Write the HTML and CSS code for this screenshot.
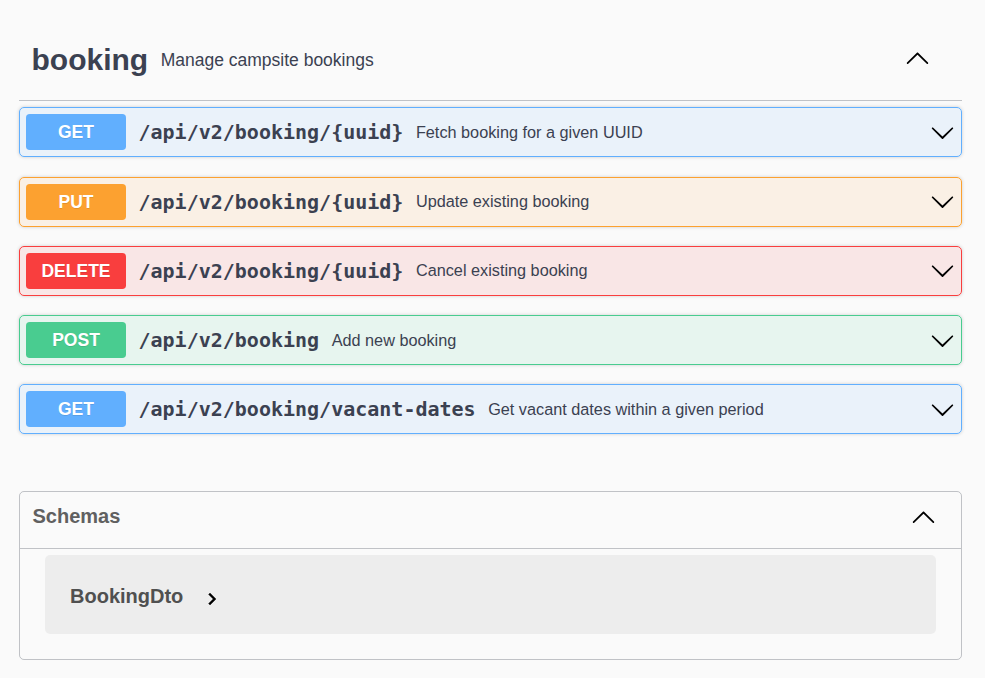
FILE: index.html
```html
<!DOCTYPE html>
<html lang="en">
<head>
<meta charset="utf-8">
<title>booking</title>
<link rel="stylesheet" href="styles.css">
</head>
<body>
<div class="wrapper">
  <section class="tag-section">
    <h3 class="tag">
      <span class="tag-name">booking</span>
      <small class="tag-desc">Manage campsite bookings</small>
      <button class="expand">
        <svg class="arrow" width="25" height="25" viewBox="0 0 20 20"><path d="M17.418 14.908c.272.268.709.268.979 0s.271-.701 0-.969L10.489 6.109c-.27-.268-.707-.268-.979 0L1.602 13.939c-.27.268-.27.701 0 .969.271.268.709.268.979 0L10 7.767l7.418 7.141z"/></svg>
      </button>
    </h3>
    <div class="opblock get">
      <div class="summary">
        <span class="method">GET</span>
        <span class="path">/api/v2/booking/{uuid}</span>
        <span class="desc">Fetch booking for a given UUID</span>
        <svg class="arrow" width="25" height="25" viewBox="0 0 20 20"><path d="M17.418 6.109c.272-.268.709-.268.979 0s.271.701 0 .969l-7.908 7.83c-.27.268-.707.268-.979 0l-7.908-7.83c-.27-.268-.27-.701 0-.969.271-.268.709-.268.979 0L10 13.25l7.418-7.141z"/></svg>
      </div>
    </div>
    <div class="opblock put">
      <div class="summary">
        <span class="method">PUT</span>
        <span class="path">/api/v2/booking/{uuid}</span>
        <span class="desc">Update existing booking</span>
        <svg class="arrow" width="25" height="25" viewBox="0 0 20 20"><path d="M17.418 6.109c.272-.268.709-.268.979 0s.271.701 0 .969l-7.908 7.83c-.27.268-.707.268-.979 0l-7.908-7.83c-.27-.268-.27-.701 0-.969.271-.268.709-.268.979 0L10 13.25l7.418-7.141z"/></svg>
      </div>
    </div>
    <div class="opblock delete">
      <div class="summary">
        <span class="method">DELETE</span>
        <span class="path">/api/v2/booking/{uuid}</span>
        <span class="desc">Cancel existing booking</span>
        <svg class="arrow" width="25" height="25" viewBox="0 0 20 20"><path d="M17.418 6.109c.272-.268.709-.268.979 0s.271.701 0 .969l-7.908 7.83c-.27.268-.707.268-.979 0l-7.908-7.83c-.27-.268-.27-.701 0-.969.271-.268.709-.268.979 0L10 13.25l7.418-7.141z"/></svg>
      </div>
    </div>
    <div class="opblock post">
      <div class="summary">
        <span class="method">POST</span>
        <span class="path">/api/v2/booking</span>
        <span class="desc">Add new booking</span>
        <svg class="arrow" width="25" height="25" viewBox="0 0 20 20"><path d="M17.418 6.109c.272-.268.709-.268.979 0s.271.701 0 .969l-7.908 7.83c-.27.268-.707.268-.979 0l-7.908-7.830c-.27-.268-.27-.701 0-.969.271-.268.709-.268.979 0L10 13.25l7.418-7.141z"/></svg>
      </div>
    </div>
    <div class="opblock get">
      <div class="summary">
        <span class="method">GET</span>
        <span class="path">/api/v2/booking/vacant-dates</span>
        <span class="desc">Get vacant dates within a given period</span>
        <svg class="arrow" width="25" height="25" viewBox="0 0 20 20"><path d="M17.418 6.109c.272-.268.709-.268.979 0s.271.701 0 .969l-7.908 7.83c-.27.268-.707.268-.979 0l-7.908-7.83c-.27-.268-.27-.701 0-.969.271-.268.709-.268.979 0L10 13.25l7.418-7.141z"/></svg>
      </div>
    </div>
  </section>

  <section class="models">
    <h4 class="models-head">
      <span class="models-title">Schemas</span>
      <svg class="arrow" width="25" height="25" viewBox="0 0 20 20"><path d="M17.418 14.908c.272.268.709.268.979 0s.271-.701 0-.969L10.489 6.109c-.27-.268-.707-.268-.979 0L1.602 13.939c-.27.268-.27.701 0 .969.271.268.709.268.979 0L10 7.767l7.418 7.141z"/></svg>
    </h4>
    <div class="model-container">
      <span class="model-title">BookingDto</span>
      <svg class="model-toggle" width="24" height="24" viewBox="0 0 24 24"><path d="M10 6L8.59 7.41 13.17 12l-4.58 4.59L10 18l6-6z"/></svg>
    </div>
  </section>
</div>
</body>
</html>
```

FILE: styles.css
```css
html, body {
  margin: 0;
  padding: 0;
  background: #fafafa;
}

body {
  font-family: "Liberation Sans", Arial, sans-serif;
  color: #3b4151;
}

.wrapper {
  margin-left: 19px;
  width: 943px;
  padding-top: 20px;
}

.tag {
  display: flex;
  align-items: center;
  box-sizing: content-box;
  height: 55px;
  margin: 0 0 6.25px;
  padding: 12.5px 25px 12.5px 12.5px;
  border-bottom: 1px solid rgba(59, 65, 81, 0.3);
  font-size: 30px;
  font-weight: bold;
  color: #3b4151;
}

.tag-name {
  line-height: normal;
}

.tag-desc {
  flex: 1;
  padding: 0 12.5px;
  font-size: 17.5px;
  font-weight: normal;
}

.expand {
  border: none;
  background: none;
  padding: 0;
  margin: 0 7px 5px 0;
  display: flex;
}

.arrow {
  display: block;
  fill: #000;
  flex: none;
}

.opblock {
  margin: 0 0 19.25px;
  border: 1px solid;
  border-radius: 5px;
  box-shadow: 0 0 3.75px rgba(0, 0, 0, 0.19);
}

.summary {
  display: flex;
  align-items: center;
  padding: 6px;
}

.method {
  flex: none;
  width: 100px;
  height: 36px;
  line-height: 36px;
  text-align: center;
  border-radius: 3.75px;
  color: #fff;
  font-size: 17.5px;
  font-weight: bold;
  text-shadow: 0 1px 0 rgba(0, 0, 0, 0.1);
}

.path {
  padding: 0 12.5px;
  font-family: "DejaVu Sans Mono", monospace;
  font-weight: bold;
  font-size: 20px;
  color: #3b4151;
}

.desc {
  flex: 1;
  font-size: 16.25px;
  color: #3b4151;
}

.get { background: rgba(97, 175, 254, 0.1); border-color: #61affe; }
.get .method { background: #61affe; }
.put { background: rgba(252, 161, 48, 0.1); border-color: #fca130; }
.put .method { background: #fca130; }
.delete { background: rgba(249, 62, 62, 0.1); border-color: #f93e3e; }
.delete .method { background: #f93e3e; }
.post { background: rgba(73, 204, 144, 0.1); border-color: #49cc90; }
.post .method { background: #49cc90; }

.models {
  margin-top: 56.75px;
  border: 1px solid rgba(59, 65, 81, 0.3);
  border-radius: 5px;
}

.models-head {
  display: flex;
  align-items: center;
  justify-content: space-between;
  box-sizing: border-box;
  height: 57px;
  margin: 0 0 6.25px;
  padding: 11px 25px 19px 12.5px;
  border-bottom: 1px solid rgba(59, 65, 81, 0.3);
  font-size: 20px;
  font-weight: bold;
  color: #606060;
}

.model-container {
  display: flex;
  align-items: center;
  box-sizing: border-box;
  height: 79px;
  margin: 0 25px 25px;
  padding: 4px 0 0 25px;
  border-radius: 5px;
  background: rgba(0, 0, 0, 0.05);
}

.model-title {
  font-size: 20px;
  font-weight: bold;
  color: #505050;
}

.model-toggle {
  display: block;
  margin: 4px 0 0 17px;
  fill: #000;
  stroke: #000;
  stroke-width: 0.4;
}
```
